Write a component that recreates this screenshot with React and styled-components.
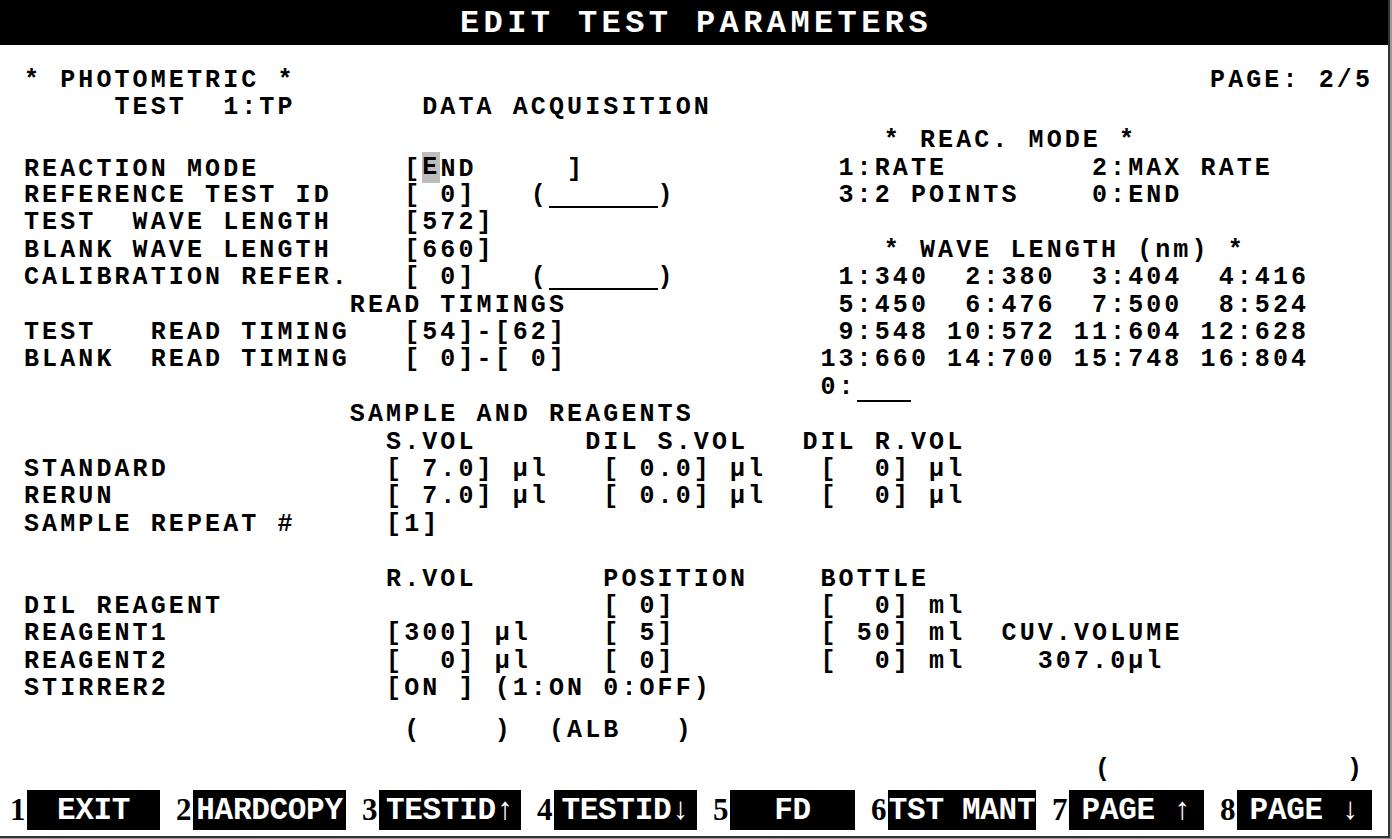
import React from "react";
import styled, { createGlobalStyle } from "styled-components";

// one character cell of the terminal grid
const CELL = 18.1;
const LINE = 27.4;

const GlobalStyle = createGlobalStyle`
  html, body {
    margin: 0;
    padding: 0;
    background: #9a9a9a;
  }
  body {
    width: 1392px;
    height: 839px;
    overflow: hidden;
  }
`;

const Screen = styled.div`
  box-sizing: border-box;
  width: 1390px;
  height: 838px;
  display: flex;
  flex-direction: column;
  background: #fff;
  color: #000;
  border-right: 2px solid #333;
  border-bottom: 2px solid #333;
  font-family: "Liberation Mono", "DejaVu Sans Mono", monospace;
  font-weight: 700;
`;

const TitleBar = styled.div`
  height: 45px;
  flex-shrink: 0;
  display: flex;
  align-items: center;
  justify-content: center;
  padding: 2px 0 0 4px;
  box-sizing: border-box;
  background: #000;
  color: #fff;
  font-size: 32px;
  letter-spacing: 4.4px;
`;

const Body = styled.div`
  flex: 1;
  display: flex;
  flex-direction: column;
  padding: 22px 0 0 24px;
  font-size: 25px;
  letter-spacing: 3.1px;
  line-height: ${LINE}px;
`;

const Line = styled.div`
  white-space: pre;
  height: ${LINE}px;
  margin-top: ${(p) => p.$gap || 0}px;
  padding-left: ${(p) => (p.$indent || 0) * CELL}px;
`;

const HeaderRow = styled.div`
  display: flex;
  justify-content: space-between;
  height: ${LINE}px;
  padding-right: 15px;
  white-space: pre;
`;

const Upper = styled.div`
  display: grid;
  grid-template-columns: ${44 * CELL}px 1fr;
  margin-top: 5.5px;
`;

const Column = styled.div`
  display: flex;
  flex-direction: column;
  padding-top: ${(p) => (p.$offset ? LINE : 0)}px;
`;

const Cursor = styled.span`
  display: inline-block;
  height: 31px;
  line-height: 31px;
  vertical-align: middle;
  margin-top: -3px;
  background: #bdbdbd;
`;

const Blank = styled.span`
  display: inline-block;
  width: ${(p) => p.$cells * CELL}px;
  height: 0;
  border-bottom: 2px solid #000;
  vertical-align: ${(p) => p.$drop || -6}px;
`;

const Footer = styled.div`
  display: flex;
  align-items: flex-end;
  gap: 16px;
  padding: 0 0 6px 10px;
`;

const KeySlot = styled.div`
  display: flex;
  flex-direction: column;
`;

const Note = styled.div`
  height: 27px;
  margin-bottom: 7px;
  padding: 0 7px 0 43px;
  text-align: ${(p) => p.$side};
  font-size: 25px;
  line-height: 27px;
  letter-spacing: 3.1px;
`;

const KeyRow = styled.div`
  display: flex;
  align-items: center;
  height: 40px;
`;

const KeyNum = styled.span`
  width: 17px;
  font-family: "Liberation Serif", "DejaVu Serif", serif;
  font-size: 31px;
  line-height: 40px;
`;

const KeyCap = styled.div`
  width: ${(p) => p.$w}px;
  height: 40px;
  display: flex;
  align-items: center;
  justify-content: center;
  background: #000;
  color: #fff;
  font-family: "Liberation Mono", "DejaVu Sans Mono", monospace;
  font-size: 31px;
  letter-spacing: -0.3px;
  white-space: pre;
  overflow: hidden;
`;

const keys = [
  { n: "1", label: "EXIT", w: 133 },
  { n: "2", label: "HARDCOPY", w: 153 },
  { n: "3", label: "TESTID\u2191", w: 142 },
  { n: "4", label: "TESTID\u2193", w: 143 },
  { n: "5", label: "FD", w: 125 },
  { n: "6", label: "TST MANT", w: 148 },
  { n: "7", label: "PAGE \u2191", w: 135, note: "(", side: "left" },
  { n: "8", label: "PAGE \u2193", w: 135, note: ")", side: "right" },
];

function Key({ n, label, w, note, side }) {
  return (
    <KeySlot>
      {note && <Note $side={side}>{note}</Note>}
      <KeyRow>
        <KeyNum>{n}</KeyNum>
        <KeyCap $w={w}>{label}</KeyCap>
      </KeyRow>
    </KeySlot>
  );
}

export default function App() {
  return (
    <>
      <GlobalStyle />
      <Screen>
        <TitleBar>EDIT TEST PARAMETERS</TitleBar>
        <Body>
          <HeaderRow>
            <span>* PHOTOMETRIC *</span>
            <span>PAGE: 2/5</span>
          </HeaderRow>
          <Line>{"     TEST  1:TP       DATA ACQUISITION"}</Line>

          <Upper>
            <Column $offset>
              <Line>
                {"REACTION MODE        ["}
                <Cursor>E</Cursor>
                {"ND     ]"}
              </Line>
              <Line>
                {"REFERENCE TEST ID    [ 0]   ("}
                <Blank $cells={6} />
                {")"}
              </Line>
              <Line>{"TEST  WAVE LENGTH    [572]"}</Line>
              <Line>{"BLANK WAVE LENGTH    [660]"}</Line>
              <Line>
                {"CALIBRATION REFER.   [ 0]   ("}
                <Blank $cells={6} />
                {")"}
              </Line>
              <Line>{"                  READ TIMINGS"}</Line>
              <Line>{"TEST   READ TIMING   [54]-[62]"}</Line>
              <Line>{"BLANK  READ TIMING   [ 0]-[ 0]"}</Line>
            </Column>
            <Column>
              <Line $indent={3.5}>* REAC. MODE *</Line>
              <Line>{" 1:RATE        2:MAX RATE"}</Line>
              <Line>{" 3:2 POINTS    0:END"}</Line>
              <Line />
              <Line $indent={3.5}>* WAVE LENGTH (nm) *</Line>
              <Line>{" 1:340  2:380  3:404  4:416"}</Line>
              <Line>{" 5:450  6:476  7:500  8:524"}</Line>
              <Line>{" 9:548 10:572 11:604 12:628"}</Line>
              <Line>{"13:660 14:700 15:748 16:804"}</Line>
              <Line>
                {"0:"}
                <Blank $cells={3} $drop={-8} />
              </Line>
            </Column>
          </Upper>

          <Line>{"                  SAMPLE AND REAGENTS"}</Line>
          <Line>{"                    S.VOL      DIL S.VOL   DIL R.VOL"}</Line>
          <Line>{"STANDARD            [ 7.0] µl   [ 0.0] µl   [  0] µl"}</Line>
          <Line>{"RERUN               [ 7.0] µl   [ 0.0] µl   [  0] µl"}</Line>
          <Line>{"SAMPLE REPEAT #     [1]"}</Line>
          <Line />
          <Line>{"                    R.VOL       POSITION    BOTTLE"}</Line>
          <Line>{"DIL REAGENT                     [ 0]        [  0] ml"}</Line>
          <Line>{"REAGENT1            [300] µl    [ 5]        [ 50] ml  CUV.VOLUME"}</Line>
          <Line>{"REAGENT2            [  0] µl    [ 0]        [  0] ml    307.0µl"}</Line>
          <Line>{"STIRRER2            [ON ] (1:ON 0:OFF)"}</Line>
          <Line $gap={14.6}>{"                     (    )  (ALB   )"}</Line>
        </Body>
        <Footer>
          {keys.map((k) => (
            <Key key={k.n} {...k} />
          ))}
        </Footer>
      </Screen>
    </>
  );
}
